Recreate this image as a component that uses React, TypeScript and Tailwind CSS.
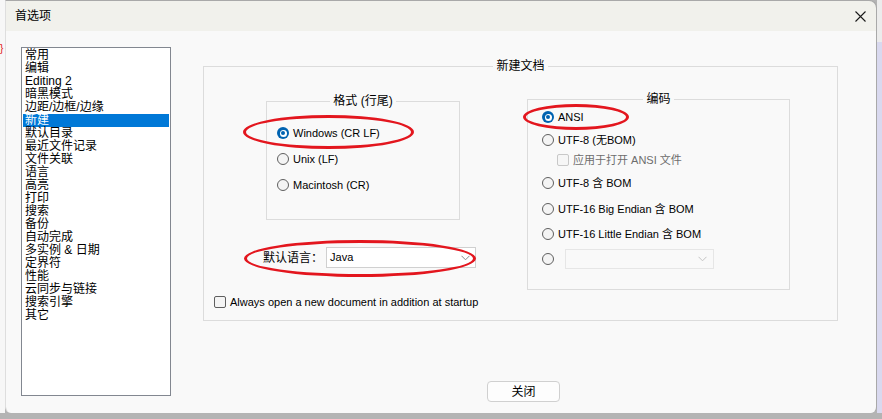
import React from 'react';

const FONT = "font-['Liberation_Sans','Noto_Sans_CJK_SC',sans-serif]";

const PAGES = [
  '常用',
  '编辑',
  'Editing 2',
  '暗黑模式',
  '边距/边框/边缘',
  '新建',
  '默认目录',
  '最近文件记录',
  '文件关联',
  '语言',
  '高亮',
  '打印',
  '搜索',
  '备份',
  '自动完成',
  '多实例 & 日期',
  '定界符',
  '性能',
  '云同步与链接',
  '搜索引擎',
  '其它',
];

function Radio({ checked }: { checked?: boolean }) {
  if (checked) {
    return (
      <span className="flex h-[12px] w-[12px] shrink-0 items-center justify-center rounded-full bg-[#0063b1]">
        <span className="flex h-[7px] w-[7px] items-center justify-center rounded-full bg-white">
          <span className="h-[4px] w-[4px] rounded-full bg-[#0063b1]" />
        </span>
      </span>
    );
  }
  return <span className="h-[12px] w-[12px] shrink-0 rounded-full border border-[#5f5f5f] bg-[#f4f4f4]" />;
}

function Check({ disabled }: { disabled?: boolean }) {
  return (
    <span
      className={
        disabled
          ? 'h-[12px] w-[12px] shrink-0 rounded-[2px] border border-[#c8c8c8] bg-[#f6f6f6]'
          : 'h-[12px] w-[12px] shrink-0 rounded-[2px] border border-[#5f5f5f] bg-[#f4f4f4]'
      }
    />
  );
}

function Chevron({ color }: { color: string }) {
  return (
    <svg width="9" height="6" viewBox="0 0 9 6" className="shrink-0">
      <path d="M0.5 0.8 L4.5 4.8 L8.5 0.8" fill="none" stroke={color} strokeWidth="1" />
    </svg>
  );
}

function Legend({ children }: { children: React.ReactNode }) {
  return (
    <span className="absolute left-0 right-0 top-[-8px] flex justify-center">
      <span className="whitespace-nowrap bg-[#f9f9f9] px-[3px] text-[12px] leading-[14px] text-black">{children}</span>
    </span>
  );
}

function RadioRow({ checked, label, className }: { checked?: boolean; label: string; className: string }) {
  return (
    <div className={`flex h-[20px] items-center gap-[4px] ${className}`}>
      <Radio checked={checked} />
      <span className="whitespace-nowrap text-[11px] text-black">{label}</span>
    </div>
  );
}

export default function App() {
  return (
    <div className={`relative flex h-[419px] w-[882px] flex-col overflow-hidden bg-[#b4b4b4] ${FONT}`}>
      <div className="flex h-[413px]">
        <div className="w-[5px] bg-[#f7f7f7] pt-[44px]">
          <span className="block text-[10px] leading-[10px] text-[#e01010]">{'}'}</span>
        </div>

        <div className="flex w-[872px] flex-col overflow-hidden rounded-tr-[8px] rounded-b-[6px] border-r border-t border-l border-[#a9a9a9] border-l-[#dedede]">
          {/* title bar */}
          <div className="flex h-[30px] items-center justify-between bg-[#f1f1ec] pl-[9px] pr-[10px]">
            <span className="text-[12px] text-black">首选项</span>
            <svg width="11" height="11" viewBox="0 0 11 11">
              <path d="M0.5 0.5 L10.5 10.5 M10.5 0.5 L0.5 10.5" stroke="#1a1a1a" strokeWidth="1.1" />
            </svg>
          </div>

          {/* body */}
          <div className="flex flex-1 bg-[#f9f9f9] pl-[15px] pt-[16px]">
            <div className="h-[349px] w-[150px] shrink-0 border border-[#828790] bg-white px-[1px] pt-[1px]">
              {PAGES.map((p) => (
                <div
                  key={p}
                  className={
                    p === '新建'
                      ? 'h-[13px] whitespace-nowrap bg-[#0078d7] pl-[2px] text-[12px] leading-[13px] text-white'
                      : 'h-[13px] whitespace-nowrap pl-[2px] text-[12px] leading-[13px] text-black'
                  }
                >
                  {p}
                </div>
              ))}
            </div>

            <div className="ml-[32px] flex flex-col">
              {/* 新建文档 */}
              <div className="relative mt-[19px] h-[255px] w-[635px] border border-[#dcdcdc]">
                <Legend>新建文档</Legend>
                <div className="flex pl-[10px] pt-[32px]">
                  <div className="flex w-[262px] shrink-0 flex-col">
                    {/* 格式 */}
                    <div className="relative ml-[52px] mt-[2px] h-[119px] w-[194px] border border-[#dcdcdc] pl-[10px] pt-[21px]">
                      <Legend>格式 (行尾)</Legend>
                      <RadioRow checked label="Windows (CR LF)" className="" />
                      <RadioRow label="Unix (LF)" className="mt-[6px]" />
                      <RadioRow label="Macintosh (CR)" className="mt-[6px]" />
                    </div>

                    <div className="ml-[49px] mt-[27px] flex h-[21px] items-center gap-[3px]">
                      <span className="whitespace-nowrap text-[12px] text-black">默认语言：</span>
                      <div className="flex h-[21px] w-[150px] shrink-0 items-center justify-between border border-[#d0d0d0] bg-white pl-[3px] pr-[5px]">
                        <span className="text-[11px] text-black">Java</span>
                        <Chevron color="#8a8a8a" />
                      </div>
                    </div>

                    <div className="mt-[27px] flex h-[14px] items-center gap-[4px]">
                      <Check />
                      <span className="whitespace-nowrap text-[11px] text-black">
                        Always open a new document in addition at startup
                      </span>
                    </div>
                  </div>

                  {/* 编码 */}
                  <div className="relative ml-[51px] h-[191px] w-[263px] shrink-0 border border-[#dcdcdc] pl-[14px] pt-[7px]">
                    <Legend>编码</Legend>
                    <RadioRow checked label="ANSI" className="" />
                    <RadioRow label="UTF-8 (无BOM)" className="mt-[3px]" />
                    <div className="flex h-[20px] items-center gap-[4px] pl-[15px]">
                      <Check disabled />
                      <span className="whitespace-nowrap text-[11px] text-[#6d6d6d]">应用于打开 ANSI 文件</span>
                    </div>
                    <RadioRow label="UTF-8 含 BOM" className="mt-[3px]" />
                    <RadioRow label="UTF-16 Big Endian 含 BOM" className="mt-[6px]" />
                    <RadioRow label="UTF-16 Little Endian 含 BOM" className="mt-[5px]" />
                    <div className="mt-[5px] flex h-[20px] items-center gap-[11px]">
                      <Radio />
                      <div className="flex h-[20px] w-[149px] items-center justify-end border border-[#e6e6e6] bg-[#f9f9f9] pr-[6px]">
                        <Chevron color="#c4c4c4" />
                      </div>
                    </div>
                  </div>
                </div>
              </div>

              <div className="mt-[60px] flex justify-center pl-[6px]">
                <button className="flex h-[21px] w-[73px] items-center justify-center rounded-[4px] border border-[#d0d0d0] bg-[#fdfdfd] text-[12px] text-black">
                  关闭
                </button>
              </div>
            </div>
          </div>
        </div>

        <div className="flex w-[5px] flex-col">
          <div className="h-[42px] bg-[#ececec]" />
          <div className="flex-1 bg-[#d9d9ef]" />
        </div>
      </div>

      {/* red annotation marks */}
      <div className="absolute left-[243px] top-[115px] h-[34px] w-[171px] rounded-[50%] border-[3px] border-[#e3161e]" />
      <div className="absolute left-[523px] top-[104px] h-[26px] w-[106px] rounded-[50%] border-[3px] border-[#e3161e]" />
      <div className="absolute left-[244px] top-[240px] h-[37px] w-[232px] rounded-[50%] border-[3px] border-[#e3161e]" />
    </div>
  );
}
